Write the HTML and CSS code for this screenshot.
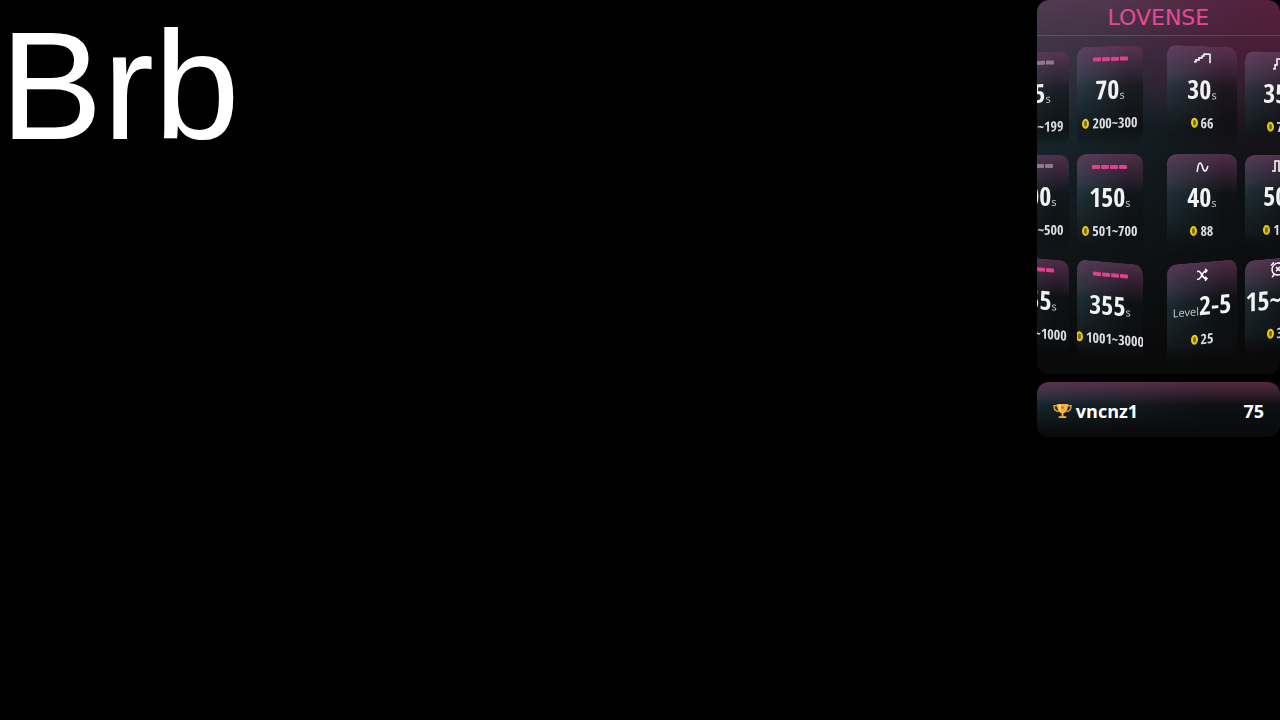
FILE: index.html
```html
<!DOCTYPE html>
<html lang="en">
<head>
    <meta charset="UTF-8">
    <meta name="viewport" content="width=device-width, initial-scale=1.0">
    <title>Brb</title>
    <link rel="stylesheet" href="styles.css">
</head>
<body>

    <h1 class="status">Brb</h1>

    <aside class="overlay">
        <!-- Tip menu -->
        <section class="menu">
            <header class="brand">LOVENSE</header>

            <div class="faces">
                <!-- Basic levels -->
                <div class="face face-left">
                    <div class="column outer">
                        <div class="card tilt-up">
                            <span class="bars muted"><i></i><i></i><i></i><i></i></span>
                            <p class="time">35<small>s</small></p>
                            <p class="price"><span class="coin"></span>100~199</p>
                        </div>
                        <div class="card">
                            <span class="bars muted"><i></i><i></i><i></i><i></i></span>
                            <p class="time">100<small>s</small></p>
                            <p class="price"><span class="coin"></span>301~500</p>
                        </div>
                        <div class="card tilt-down-more">
                            <span class="bars"><i></i><i></i><i></i><i></i></span>
                            <p class="time">255<small>s</small></p>
                            <p class="price"><span class="coin"></span>701~1000</p>
                        </div>
                    </div>
                    <div class="column">
                        <div class="card tilt-up">
                            <span class="bars"><i></i><i></i><i></i><i></i></span>
                            <p class="time">70<small>s</small></p>
                            <p class="price"><span class="coin"></span>200~300</p>
                        </div>
                        <div class="card">
                            <span class="bars"><i></i><i></i><i></i><i></i></span>
                            <p class="time">150<small>s</small></p>
                            <p class="price"><span class="coin"></span>501~700</p>
                        </div>
                        <div class="card tilt-down-more">
                            <span class="bars"><i></i><i></i><i></i><i></i></span>
                            <p class="time">355<small>s</small></p>
                            <p class="price"><span class="coin"></span>1001~3000</p>
                        </div>
                    </div>
                </div>

                <!-- Special patterns -->
                <div class="face face-right">
                    <div class="column">
                        <div class="card tilt-down">
                            <svg class="icon" viewBox="0 0 18 16"><path d="M1 11h2v-2h3v-2h3v-2h2v-2h6v9"/></svg>
                            <p class="time">30<small>s</small></p>
                            <p class="price"><span class="coin"></span>66</p>
                        </div>
                        <div class="card">
                            <svg class="icon" viewBox="0 0 18 16"><path d="M4 13c1-4 1-9 3-9 3 0 2 8 5 8 2 0 2-3 3-5"/></svg>
                            <p class="time">40<small>s</small></p>
                            <p class="price"><span class="coin"></span>88</p>
                        </div>
                        <div class="card tilt-up-more">
                            <svg class="icon" viewBox="0 0 18 16"><path d="M4 4h1c4 0 4 8 8 8h1M4 12h1c4 0 4-8 8-8h1M12 2l2 2-2 2M12 10l2 2-2 2"/></svg>
                            <p class="time"><small>Level</small>2-5</p>
                            <p class="price"><span class="coin"></span>25</p>
                        </div>
                    </div>
                    <div class="column outer">
                        <div class="card tilt-down">
                            <svg class="icon" viewBox="0 0 18 16"><path d="M4 14h2v-4h2v-6h6v4h2v6"/></svg>
                            <p class="time">35<small>s</small></p>
                            <p class="price"><span class="coin"></span>77</p>
                        </div>
                        <div class="card">
                            <svg class="icon" viewBox="0 0 18 16"><path d="M3 13h3v-10h4v10h3v-10h3v10h2"/></svg>
                            <p class="time">50<small>s</small></p>
                            <p class="price"><span class="coin"></span>111</p>
                        </div>
                        <div class="card tilt-up-more">
                            <svg class="icon" viewBox="0 0 18 16"><circle cx="9" cy="8" r="6"/><path d="M7 6l4 4M11 6l-4 4M2 4l3-3M16 4l-3-3M5 13l-2 3M13 13l2 3"/></svg>
                            <p class="time">15~45<small>s</small></p>
                            <p class="price"><span class="coin"></span>35</p>
                        </div>
                    </div>
                </div>
            </div>
        </section>

        <!-- Top tipper -->
        <section class="leader">
            <svg class="trophy" viewBox="0 0 20 18">
                <path d="M5 4H1c0 4 2 6 5 6M15 4h4c0 4-2 6-5 6" fill="none" stroke="#e9a23b" stroke-width="1.500"/>
                <path d="M4 2h12c0 6-2 9-5 10v3h3v2H6v-2h3v-3C6 11 4 8 4 2z" fill="#f3b13e"/>
                <path d="M6 3h2c0 4 0 6 1 8C7 9 6 7 6 3z" fill="#ffe08a"/>
                <circle cx="10" cy="6" r="1.500" fill="#e2672f"/>
            </svg>
            <span class="name">vncnz1</span>
            <span class="score">75</span>
        </section>
    </aside>

</body>
</html>
```
FILE: styles.css
```css
/* Basic Styles */
body {
    margin: 0;
    background-color: #000;
    color: #fff;
    font-family: "Open Sans", "Noto Sans", sans-serif;
    display: flex;
    justify-content: space-between;
    align-items: flex-start;
    overflow-x: hidden;
}

p {
    margin: 0;
}

.status {
    margin: 0;
    font: 154px/172px "Liberation Sans", Arial, sans-serif;
}

.overlay {
    width: 19%;
    min-width: 243px;
    display: flex;
    flex-direction: column;
    gap: 8px;
}

/* Tip Menu */
.menu {
    border-radius: 12px;
    overflow: hidden;
    padding-bottom: 12px;
    background:
        linear-gradient(to bottom, rgba(10, 10, 10, 0) 25%, #0a0a0a 92%),
        radial-gradient(circle 180px at 100% 0, rgba(88, 22, 54, 0.7), rgba(60, 12, 40, 0)),
        linear-gradient(to bottom, rgba(112, 66, 98, 0.65), rgba(60, 30, 55, 0) 34%),
        linear-gradient(to right, #1a2c33, #0f1418 90%);
}

.brand {
    height: 35px;
    border-bottom: 1px solid rgba(255, 255, 255, 0.15);
    color: #e54a94;
    font: 22px/36px "DejaVu Sans", Verdana, sans-serif;
    text-align: center;
}

.faces {
    display: flex;
    gap: 24px;
}

.face {
    display: flex;
    gap: 8px;
    min-width: 0;
    overflow: hidden;
}

.face-left {
    flex: 15;
    justify-content: flex-end;
}

.face-right {
    flex: 16;
}

.column {
    flex: none;
    width: 66px;
    padding-top: 10px;
    display: flex;
    flex-direction: column;
    gap: 8px;
}

.face-right .column {
    width: 70px;
}

.face .outer {
    width: 66px;
    padding-top: 16px;
}

.card {
    height: 100px;
    box-sizing: border-box;
    padding-top: 5px;
    border-radius: 9px;
    display: flex;
    flex-direction: column;
    align-items: center;
    font-family: "Open Sans Condensed", "Open Sans", sans-serif;
    white-space: nowrap;
    background:
        linear-gradient(to bottom, rgba(13, 16, 18, 0) 30%, rgba(13, 16, 18, 0.8) 90%),
        linear-gradient(to bottom, rgba(130, 66, 112, 0.55), rgba(100, 40, 90, 0) 40%),
        linear-gradient(to right, rgba(48, 78, 88, 0.55), rgba(18, 20, 24, 0.5) 80%);
    mask-image: linear-gradient(to bottom, #000 82%, transparent 100%);
}

.outer .card {
    height: 95px;
    padding-top: 3px;
}

/* The rows bend away from the middle one */
.tilt-up {
    transform: skewY(-2deg);
}

.tilt-down {
    transform: skewY(2deg);
}

.tilt-up-more {
    transform: skewY(-5deg);
}

.tilt-down-more {
    transform: skewY(5deg);
}

.icon {
    width: 18px;
    height: 16px;
    fill: none;
    stroke: #fff;
    stroke-width: 1.5;
}

.bars {
    height: 16px;
    display: flex;
    align-items: center;
    gap: 1px;
}

.bars i {
    width: 8px;
    height: 4px;
    border-radius: 1px;
    background-color: #e0408f;
}

.muted i {
    background-color: #8d7a8a;
}

.time {
    color: #f2f2f4;
    font-size: 26px;
    font-weight: bold;
    line-height: 44px;
}

.time small {
    font-family: "Open Sans", sans-serif;
    font-size: 11px;
    font-weight: normal;
    color: #ccd0d4;
}

.price {
    display: flex;
    align-items: center;
    gap: 3px;
    color: #dcdee2;
    font-size: 14px;
    line-height: 12px;
}

.coin {
    width: 3px;
    height: 6px;
    border: 2px solid #e3cc1c;
    border-radius: 50%;
    background-color: #7d6a08;
}

/* Top Tipper */
.leader {
    height: 55px;
    box-sizing: border-box;
    padding: 2px 16px 0;
    border-radius: 12px;
    display: flex;
    align-items: center;
    gap: 4px;
    font-size: 18px;
    font-weight: bold;
    background:
        linear-gradient(to bottom, rgba(112, 50, 84, 0.7), rgba(80, 30, 60, 0) 42%),
        linear-gradient(to bottom, rgba(10, 10, 10, 0) 10%, #090a0b 95%),
        linear-gradient(to right, #1e3740, #101418 70%);
}

.trophy {
    width: 19px;
    height: 17px;
}

.score {
    margin-left: auto;
}
```
